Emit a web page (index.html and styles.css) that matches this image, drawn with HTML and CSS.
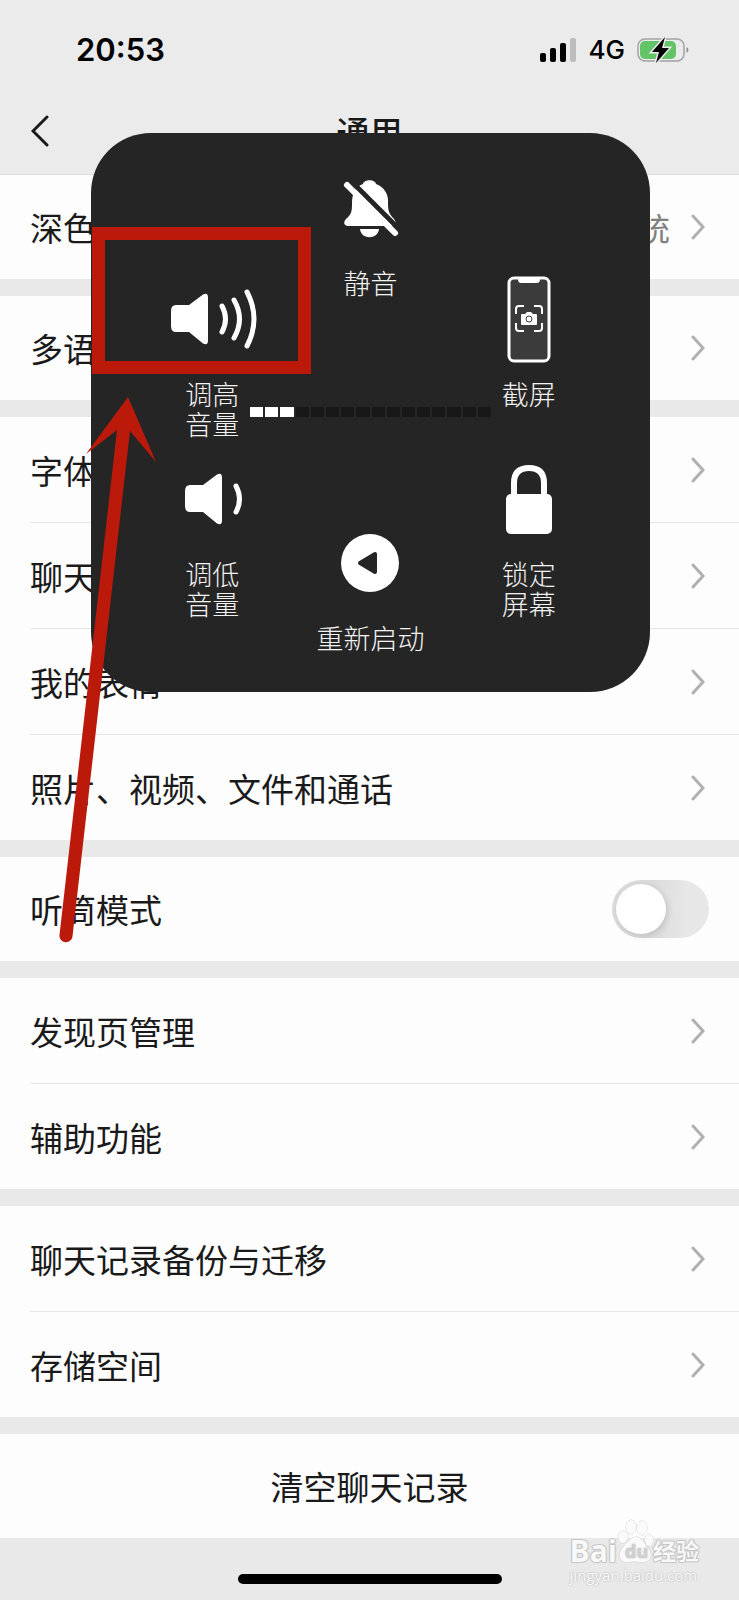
FILE: index.html
```
<!DOCTYPE html>
<html lang="zh-CN">

<head>
    <meta charset="UTF-8">
    <meta name="viewport" content="width=device-width, initial-scale=1">
    <link rel="stylesheet" href="styles.css">
    <title>通用</title>
</head>

<body>
    <svg class="sprite" aria-hidden="true">
        <symbol id="chevron" viewBox="0 0 14 26">
            <path d="M2 2l10 11L2 24" fill="none" stroke="#b0b0b0" stroke-width="3" stroke-linecap="round" />
        </symbol>
        <symbol id="speaker" viewBox="0 0 40 52">
            <path d="M6 12h13L33 1.500q5-2.500 5 3v43q0 5.500-5 3L19 39H6q-5 0-5-6V18q0-6 5-6z" fill="#fff" />
        </symbol>
    </svg>

    <header>
        <div class="status-bar">
            <span class="time">20:53</span>
            <div class="status-icons">
                <svg width="37" height="24" viewBox="0 0 37 24">
                    <rect x="0" y="15" width="6" height="9" rx="2" />
                    <rect x="10" y="10" width="6" height="14" rx="2" />
                    <rect x="20" y="5" width="6" height="19" rx="2" />
                    <rect x="30" y="0" width="6" height="24" rx="2" fill="#bdbdbd" />
                </svg>
                <span class="network">4G</span>
                <svg width="52" height="26" viewBox="0 0 52 26">
                    <rect x="1" y="2" width="46" height="22" rx="7" fill="none" stroke="#a3a3a3" stroke-width="1.500" />
                    <path d="M49.500 10q2 .8 2 3t-2 3z" fill="#8d8d8d" />
                    <rect x="3" y="4" width="36" height="18" rx="5" fill="#62c466" />
                    <path d="M28 0L15 15h7l-3 11 13-15h-7z" stroke="#ebebeb" stroke-width="3" />
                    <path d="M28 0L15 15h7l-3 11 13-15h-7z" />
                </svg>
            </div>
        </div>
        <nav class="nav-bar">
            <button type="button" class="back" aria-label="返回">
                <svg width="18" height="32" viewBox="0 0 18 32">
                    <path d="M16 2L2 16l14 14" fill="none" stroke="#1a1a1a" stroke-width="3" stroke-linecap="round" />
                </svg>
            </button>
            <h1>通用</h1>
        </nav>
    </header>

    <main>
        <ul class="group">
            <li><a href="#">深色模式<span class="value">跟随系统</span><svg class="chevron"><use href="#chevron" /></svg></a></li>
        </ul>
        <ul class="group">
            <li><a href="#">多语言<svg class="chevron"><use href="#chevron" /></svg></a></li>
        </ul>
        <ul class="group">
            <li><a href="#">字体大小<svg class="chevron"><use href="#chevron" /></svg></a></li>
            <li><a href="#">聊天<svg class="chevron"><use href="#chevron" /></svg></a></li>
            <li><a href="#">我的表情<svg class="chevron"><use href="#chevron" /></svg></a></li>
            <li><a href="#">照片、视频、文件和通话<svg class="chevron"><use href="#chevron" /></svg></a></li>
        </ul>
        <ul class="group">
            <li><label for="earpiece">听筒模式<input type="checkbox" id="earpiece" class="switch"></label></li>
        </ul>
        <ul class="group">
            <li><a href="#">发现页管理<svg class="chevron"><use href="#chevron" /></svg></a></li>
            <li><a href="#">辅助功能<svg class="chevron"><use href="#chevron" /></svg></a></li>
        </ul>
        <ul class="group">
            <li><a href="#">聊天记录备份与迁移<svg class="chevron"><use href="#chevron" /></svg></a></li>
            <li><a href="#">存储空间<svg class="chevron"><use href="#chevron" /></svg></a></li>
        </ul>
        <ul class="group">
            <li><button type="button" class="clear">清空聊天记录</button></li>
        </ul>
    </main>

    <footer>
        <div class="home-indicator"></div>
        <div class="watermark">
            <div class="brand">
                <span class="brand-latin">Bai</span>
                <svg width="36" height="46" viewBox="0 0 36 46" fill="#fafafa" stroke="#d2d2d2">
                    <ellipse cx="6" cy="18" rx="5" ry="6" />
                    <ellipse cx="14" cy="8" rx="5" ry="7" />
                    <ellipse cx="25" cy="9" rx="5" ry="7" />
                    <ellipse cx="32" cy="21" rx="4" ry="6" />
                    <path d="M19 18c6 0 8 7 12 11 5 6 3 14-5 14-5 0-9-1-13 0-9 2-13-6-8-13 4-5 8-12 14-12z" />
                    <text x="8" y="39">du</text>
                </svg>
                <span class="brand-cn">经验</span>
            </div>
            <div class="site">jingyan.baidu.com</div>
        </div>
    </footer>

    <!-- AssistiveTouch device menu -->
    <div class="overlay">
        <div class="panel">
            <div class="side">
                <button type="button" class="tile">
                    <svg class="icon" viewBox="0 0 88 88">
                        <use href="#speaker" x="2" y="18" width="40" height="52" />
                        <path d="M54 31q7 13 0 26M66 25q11 19 0 38M79 17q14 27 0 54" fill="none" stroke="#fff" stroke-width="5" stroke-linecap="round" />
                    </svg>
                    <span>调高<br>音量</span>
                </button>
                <button type="button" class="tile">
                    <svg class="icon" viewBox="0 0 88 88">
                        <use href="#speaker" x="16" y="18" width="40" height="52" />
                        <path d="M68 31q7 13 0 26" fill="none" stroke="#fff" stroke-width="5" stroke-linecap="round" />
                    </svg>
                    <span>调低<br>音量</span>
                </button>
            </div>
            <div class="middle">
                <button type="button" class="tile">
                    <svg class="icon" viewBox="0 0 88 88">
                        <path d="M37 20c1-5 12-5 13 0 8 3 13 10 12 20 0 8 2 11 6 15 3 4 2 7-2 7H22c-4 0-5-4-2-7 5-4 6-7 6-15 0-11 3-17 11-20zM34 65h19c-1 11-18 11-19 0z" fill="#fff" />
                        <path d="M24 16l48 48" stroke="#252525" stroke-width="5" />
                        <path d="M21 21l48 48" stroke="#fff" stroke-width="6" stroke-linecap="round" />
                    </svg>
                    <span>静音</span>
                </button>
                <button type="button" class="tile">
                    <svg class="icon" viewBox="0 0 88 88">
                        <circle cx="44" cy="44" r="29" fill="#fff" />
                        <path d="M34 44l15-9v18z" fill="#252525" stroke="#252525" stroke-width="4" stroke-linejoin="round" />
                    </svg>
                    <span>重新启动</span>
                </button>
            </div>
            <div class="side">
                <button type="button" class="tile">
                    <svg class="icon" viewBox="0 0 88 88">
                        <rect x="24" y="3" width="40" height="83" rx="5" fill="#3b3b3b" stroke="#fff" stroke-width="3" />
                        <path d="M33 2h22v2q0 4-3 4H36q-3 0-3-4z" fill="#fff" />
                        <path d="M31 39v-5q0-3 3-3h5M49 31h5q3 0 3 3v5M57 48v5q0 3-3 3h-5M39 56h-5q-3 0-3-3v-5" fill="none" stroke="#fff" stroke-width="2" />
                        <path d="M37 39h3l2-2h4l2 2h3q1 0 1 1v9q0 1-1 1H37q-1 0-1-1v-9q0-1 1-1z" fill="#fff" />
                        <circle cx="44" cy="44" r="3" fill="none" stroke="#3b3b3b" />
                    </svg>
                    <span>截屏</span>
                </button>
                <button type="button" class="tile">
                    <svg class="icon" viewBox="0 0 88 88">
                        <rect x="21" y="39" width="46" height="40" rx="5" fill="#fff" />
                        <path d="M29 41V28q0-15 15-15t15 15v13" fill="none" stroke="#fff" stroke-width="6" />
                    </svg>
                    <span>锁定<br>屏幕</span>
                </button>
            </div>
            <div class="volume" role="meter" aria-label="音量" aria-valuemin="0" aria-valuemax="16" aria-valuenow="3">
                <i class="on"></i><i class="on"></i><i class="on"></i><i></i>
                <i></i><i></i><i></i><i></i>
                <i></i><i></i><i></i><i></i>
                <i></i><i></i><i></i><i></i>
            </div>
        </div>
    </div>

    <svg class="callout" width="320" height="950" viewBox="0 0 320 950" aria-hidden="true">
        <rect x="98.500" y="233.500" width="206" height="134" fill="none" stroke="#bb1a0b" stroke-width="13" />
        <path d="M128 397L86 454l31-24L59.500 935a6.500 6.500 0 0 0 13 1.500L130 431l26 31z" fill="#bb1a0b" />
    </svg>
</body>

</html>
```
FILE: styles.css
```
* {
    box-sizing: border-box;
}

body {
    position: relative;
    margin: 0;
    background-color: #e9e9e9;
    color: #1a1a1a;
    font-family: "Noto Sans CJK SC", sans-serif;
    font-size: 33px;
    line-height: 48px;
}

button {
    border: none;
    padding: 0;
    background: none;
    color: inherit;
    font: inherit;
    cursor: pointer;
}

.sprite {
    display: none;
}

/* header */
header {
    background-color: #ebebeb;
    border-bottom: 1px solid #dedede;
}

.status-bar {
    display: flex;
    justify-content: space-between;
    align-items: center;
    height: 88px;
    padding: 11px 50px 0 76px;
    color: #000;
    font-family: Inter, sans-serif;
}

.time {
    font-size: 31px;
    font-weight: 600;
}

.status-icons {
    display: flex;
    align-items: center;
    gap: 12px;
}

.network {
    font-size: 26px;
    font-weight: 500;
}

.nav-bar {
    display: grid;
    grid-template-columns: 1fr auto 1fr;
    align-items: center;
    height: 86px;
    padding: 0 31px;
}

.back {
    display: flex;
    justify-self: start;
}

h1 {
    margin: 0;
    font-size: 33px;
    font-weight: 500;
}

/* settings list */
.group {
    list-style: none;
    margin: 0 0 17px;
    padding: 0;
    background-color: #fdfdfd;
}

.group:last-child {
    margin-bottom: 0;
}

.group li {
    padding-left: 30px;
}

.group a,
.group label,
.clear {
    display: flex;
    align-items: center;
    width: 100%;
    min-height: 105px;
    padding-right: 34px;
    color: inherit;
    text-decoration: none;
}

.group li:only-child > * {
    min-height: 104px;
}

.group li + li > * {
    min-height: 106px;
    border-top: 1px solid #e6e6e6;
}

.group label {
    padding-right: 30px;
}

.value {
    margin-left: auto;
    color: #808080;
    font-size: 32px;
}

.chevron {
    width: 14px;
    height: 26px;
    margin-left: auto;
}

.value + .chevron {
    margin-left: 21px;
}

.switch {
    appearance: none;
    width: 97px;
    height: 58px;
    margin: 0 0 0 auto;
    padding: 4px;
    border-radius: 29px;
    background: linear-gradient(90deg, #dadada 40%, #e7e7e7 75%);
}

.switch::before {
    content: "";
    display: block;
    width: 50px;
    height: 50px;
    border-radius: 50%;
    background-color: #fff;
    box-shadow: 2px 2px 6px rgba(0, 0, 0, 0.12);
}

.switch:checked {
    background: #07c160;
}

.switch:checked::before {
    margin-left: auto;
}

.clear {
    justify-content: center;
    padding-right: 30px;
}

/* footer */
footer {
    position: relative;
    display: flex;
    justify-content: center;
    padding: 36px 0 15px;
}

.home-indicator {
    width: 264px;
    height: 10px;
    border-radius: 5px;
    background-color: #000;
}

.watermark {
    position: absolute;
    right: 40px;
    bottom: 14px;
    color: #f8f8f8;
    font-family: "Open Sans", "Noto Sans CJK SC", sans-serif;
    line-height: 20px;
    text-shadow: 0 0 2px #aaa;
}

.brand {
    display: flex;
    align-items: flex-end;
    font-weight: 700;
    -webkit-text-stroke: 2px #d2d2d2;
    paint-order: stroke fill;
}

.brand-latin {
    font-size: 30px;
    line-height: 28px;
}

.brand-cn {
    font-size: 23px;
    line-height: 28px;
}

.brand text {
    fill: #d0d0d0;
    stroke: none;
    font-size: 18px;
    -webkit-text-stroke: 0;
}

.site {
    font-size: 15px;
}

/* device menu */
.overlay {
    position: absolute;
    top: 133px;
    left: 0;
    right: 0;
    display: flex;
    justify-content: center;
    padding-left: 2px;
}

.panel {
    position: relative;
    display: grid;
    grid-template-columns: repeat(3, 1fr);
    width: 559px;
    padding: 31px 42px 39px;
    border-radius: 60px;
    background-color: #252525;
    color: #f2f2f2;
    font-size: 27px;
    font-weight: 300;
    line-height: 30px;
}

.side {
    display: flex;
    flex-direction: column;
    gap: 16px;
    padding: 111px 0 34px;
}

.middle {
    display: flex;
    flex-direction: column;
    justify-content: space-between;
}

.tile {
    display: flex;
    flex-direction: column;
    align-items: center;
    gap: 16px;
}

.side .tile {
    height: 164px;
}

.icon {
    width: 88px;
    height: 88px;
    overflow: visible;
}

.volume {
    position: absolute;
    top: 274px;
    left: 159px;
    right: 159px;
    display: flex;
    gap: 2px;
}

.volume i {
    flex: 1;
    height: 10px;
    background-color: #181818;
}

.volume .on {
    background-color: #fff;
}

/* highlight and arrow drawn over the screen */
.callout {
    position: absolute;
    top: 0;
    left: 0;
    pointer-events: none;
}
```
